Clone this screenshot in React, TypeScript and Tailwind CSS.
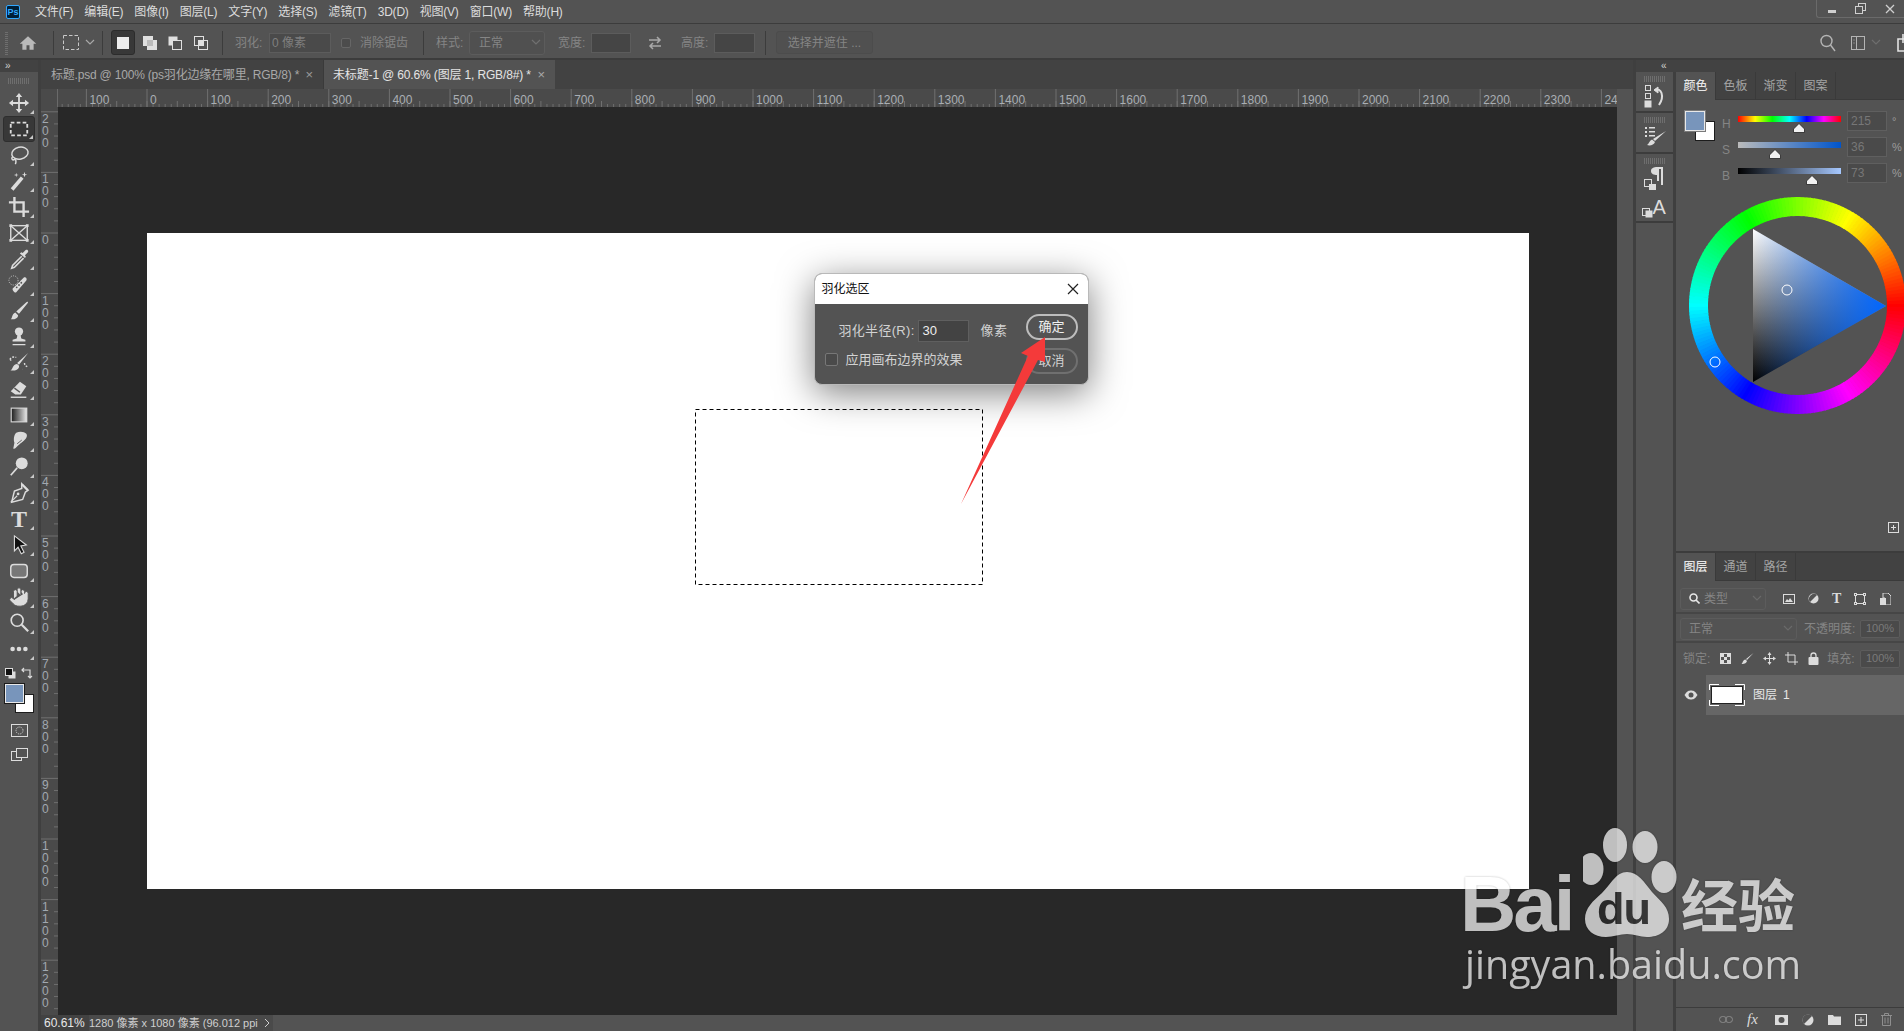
import React from 'react';
import { Hand } from 'lucide-react';

const menus = ['文件(F)', '编辑(E)', '图像(I)', '图层(L)', '文字(Y)', '选择(S)', '滤镜(T)', '3D(D)', '视图(V)', '窗口(W)', '帮助(H)'];

// 24-unit toolbar icon, stroke and fill come from each child
function Ic({ s = 22, children, className = '' }: { s?: number; children: React.ReactNode; className?: string }) {
  return (
    <svg width={s} height={s} viewBox="0 0 24 24" className={`shrink-0 ${className}`} fill="#dcdcdc" stroke="none">
      {children}
    </svg>
  );
}

const line = { fill: 'none', stroke: '#dcdcdc', strokeWidth: 2 };

const tools: { icon: React.ReactNode; active?: boolean }[] = [
  { icon: <Ic><path d="M12 5v14M5 12h14" {...line} /><path d="M12 1l3.5 4.5h-7zM12 23l-3.5-4.5h7zM1 12l4.5-3.5v7zM23 12l-4.5 3.5v-7z" /></Ic> },
  { icon: <Ic><rect x="3" y="5" width="18" height="14" {...line} strokeDasharray="4 2.5" /></Ic>, active: true },
  { icon: <Ic><ellipse cx="13" cy="10" rx="9" ry="6.5" transform="rotate(-12 13 10)" {...line} strokeWidth={1.6} /><path d="M5 14c-2 2 0 4 2 3s2 3 1 5" {...line} strokeWidth={1.6} /></Ic> },
  { icon: <Ic><path d="M3 21l11-13 3 2.5L6 23.5z" transform="translate(0 -1)" /><path d="M18 2l.8 2.5L21 5l-2.2.8L18 8l-.8-2.2L15 5l2.2-.5zM22 10v3M9 3l.5 2 2 .5-2 .5L9 8l-.5-2-2-.5 2-.5zM22 16h.1" /></Ic> },
  { icon: <Ic><path d="M7 1v16h16M1 7h16v16" {...line} strokeWidth={2.6} /></Ic> },
  { icon: <Ic><rect x="3" y="4" width="18" height="16" {...line} strokeWidth={1.5} /><path d="M3 4l18 16M21 4L3 20" {...line} strokeWidth={1.5} /><path d="M1.5 2.500h3v3h-3zM19.500 2.500h3v3h-3zM1.500 18.500h3v3h-3zM19.500 18.500h3v3h-3z" /></Ic> },
  { icon: <Ic><path d="M15 9L5 19l-1 3 3-1L17 11" {...line} strokeWidth={1.7} /><path d="M13 6l1.500-1.500 1.500 1 3-3c2-1.500 4 .5 2.500 2.500l-3 3 1 1.500L18.500 11z" /></Ic> },
  { icon: <Ic><path d="M6 15L17 4c1.500-1.500 4.500 1 3 3L9 20c-1.500 1.500-6-3.500-3-5z" /><circle cx="12" cy="12" r="1" fill="#555" /><circle cx="14.500" cy="9.500" r="1" fill="#555" /><circle cx="9.500" cy="14.500" r="1" fill="#555" /><circle cx="12" cy="8" r="1" fill="#555" /><circle cx="6" cy="7" r="5" {...line} strokeWidth={1} strokeDasharray="1 1.500" /></Ic> },
  { icon: <Ic><path d="M21 2c.8 0 1 .6.6 1.200L12 15l-3-2.500L20 2.500zM8 13.500l3 3c0 3-3.500 5-8 4.500 2-1.500 1-6 5-7.500z" /></Ic> },
  { icon: <Ic><circle cx="12" cy="6" r="4.500" /><path d="M10.500 9h3l1 4.500 4.500 1.500v2H5v-2l4.500-1.500zM5 19.500h14V21H5z" /></Ic> },
  { icon: <Ic><path d="M22 1L12 14l-2-2zM9.500 13c2 .5 3 2 2.500 3.500-1 3-5 4.500-9.500 3.500 3-1 2-6 7-7z" /><path d="M2 8c2-3 5-3 7-2M2 8l2.500 2M18 12c0 2 1 3 3 4M16 19h.1" {...line} strokeWidth={1.500} strokeDasharray="2 1.500" /></Ic> },
  { icon: <Ic><path d="M13 4l7 5-6 9H8l-5-3.500z" /><path d="M3 21h17" {...line} strokeWidth={1.500} /><path d="M7 11l6 4.500" stroke="#555" strokeWidth={1.500} /></Ic> },
  { icon: <Ic><defs><linearGradient id="grad"><stop offset="0" stopColor="#1a1a1a" /><stop offset="1" stopColor="#e8e8e8" /></linearGradient></defs><rect x="3.500" y="4.500" width="17" height="15" fill="url(#grad)" stroke="#dcdcdc" strokeWidth={1.200} /></Ic> },
  { icon: <Ic><path d="M9 3c4-2 9-1 11 1 2 3-1 6-3 8l-6 5-3 3c-1 1-3 .5-2-1l1-5c-1-3-1-8 2-11z" /><path d="M10 15l5-4M13 16l4-3" stroke="#555" strokeWidth={1} /></Ic> },
  { icon: <Ic><circle cx="15" cy="8" r="6.500" /><path d="M10 13L3 21" {...line} strokeWidth={1.800} /></Ic> },
  { icon: <Ic><path d="M15 2l7 7-3 2-3 8-12 3 3-12 8-3z" {...line} strokeWidth={1.600} /><path d="M3 22l7-7" {...line} strokeWidth={1.200} /><circle cx="11" cy="13" r="1.500" /><path d="M14 3l7 7 1-2-6-6z" /></Ic> },
  { icon: <span className="text-[24px] font-bold leading-none text-[#dcdcdc] [font-family:'Liberation_Serif',serif]">T</span> },
  { icon: <Ic><path d="M7 2l13 10-6 1 3.500 7-3 1.500-3.500-7-4 4z" fill="#111" stroke="#dcdcdc" strokeWidth={1.200} /></Ic> },
  { icon: <Ic><rect x="3" y="5" width="18" height="14" rx="3.500" fill="#777" stroke="#dcdcdc" strokeWidth={1.600} /></Ic> },
  { icon: <Hand size={22} className="fill-[#dcdcdc] text-[#535353]" strokeWidth={1} /> },
  { icon: <Ic><circle cx="10" cy="9" r="6.500" {...line} strokeWidth={1.800} /><path d="M15 14l7 7" {...line} strokeWidth={2.400} /></Ic> },
  { icon: <Ic><circle cx="5" cy="12" r="2.500" /><circle cx="12" cy="12" r="2.500" /><circle cx="19" cy="12" r="2.500" /></Ic> },
];

function Sep() {
  return <div className="h-[24px] w-px shrink-0 bg-[#3c3c3c]" />;
}

function Grip({ className = '' }: { className?: string }) {
  return <div className={`h-[6px] border-x-0 bg-[repeating-linear-gradient(90deg,#6e6e6e_0,#6e6e6e_1px,transparent_1px,transparent_2px)] ${className}`} />;
}

function Chev({ className = '' }: { className?: string }) {
  return (
    <svg width="10" height="7" viewBox="0 0 10 7" className={`shrink-0 ${className}`} fill="none" stroke="currentColor" strokeWidth="1.200">
      <path d="M1 1l4 4 4-4" />
    </svg>
  );
}

function OptionsBar() {
  const lbl = 'shrink-0 whitespace-nowrap text-[12px] text-[#858585]';
  const box = 'shrink-0 border border-[#5c5c5c] bg-[#4a4a4a]';
  return (
    <div className="flex h-[36px] shrink-0 items-center border-b-2 border-[#3c3c3c] pl-[5px] pt-[3px]">
      <div className="h-[24px] w-[3px] bg-[repeating-linear-gradient(0deg,#6e6e6e_0,#6e6e6e_1px,transparent_1px,transparent_2px)]" />
      <Ic s={18} className="ml-[11px]"><path d="M12 3L1 13h3.500v8H10v-6h4v6h5.500v-8H23z" fill="#b9b9b9" /></Ic>
      <div className="ml-[16px]"><Sep /></div>
      <svg width="16" height="15" viewBox="0 0 16 15" className="ml-[9px] shrink-0" fill="none" stroke="#c8c8c8"><rect x="0.500" y="0.500" width="15" height="14" strokeDasharray="3.500 2" /></svg>
      <Chev className="ml-[6px] text-[#a8a8a8]" />
      <div className="ml-[7px]"><Sep /></div>
      <div className="ml-[8px] flex h-[25px] w-[24px] shrink-0 items-center justify-center rounded-[3px] border border-[#2c2c2c] bg-[#383838]">
        <div className="h-[12px] w-[12px] bg-[#ececec]" />
      </div>
      <svg width="16" height="16" viewBox="0 0 16 16" className="ml-[7px] shrink-0" fill="#e0e0e0"><rect x="1" y="1" width="10" height="10" /><rect x="5" y="5" width="10" height="10" /><path d="M5 5h6v6H5z" fill="#bbb" /></svg>
      <svg width="16" height="16" viewBox="0 0 16 16" className="ml-[9px] shrink-0"><rect x="1.500" y="1.500" width="9" height="9" fill="#e0e0e0" /><rect x="5.500" y="5.500" width="9" height="9" fill="#535353" stroke="#e0e0e0" /></svg>
      <svg width="16" height="16" viewBox="0 0 16 16" className="ml-[10px] shrink-0" fill="none" stroke="#e0e0e0"><rect x="1.500" y="1.500" width="9" height="9" /><rect x="5.500" y="5.500" width="9" height="9" /><rect x="5.500" y="5.500" width="5" height="5" fill="#e0e0e0" /></svg>
      <div className="ml-[13px]"><Sep /></div>
      <span className={`${lbl} ml-[12px] w-[27px]`}>羽化:</span>
      <div className={`${box} ml-[7px] h-[20px] w-[62px] pl-[2px] text-[12px] leading-[18px] text-[#7f7f7f]`}>0 像素</div>
      <div className="ml-[10px] h-[10px] w-[10px] shrink-0 rounded-[2px] border border-[#666] bg-[#4c4c4c]" />
      <span className={`${lbl} ml-[9px] w-[48px]`}>消除锯齿</span>
      <div className="ml-[15px]"><Sep /></div>
      <span className={`${lbl} ml-[12px] w-[27px]`}>样式:</span>
      <div className={`${box} ml-[6px] flex h-[24px] w-[76px] items-center justify-between rounded-[3px] border-[#5a5a5a] bg-[#505050] pl-[9px] pr-[3px] text-[12px] text-[#858585]`}>
        正常<Chev className="text-[#707070]" />
      </div>
      <span className={`${lbl} ml-[13px] w-[27px]`}>宽度:</span>
      <div className={`${box} ml-[6px] h-[20px] w-[40px] border-[#5c5c5c] bg-[#454545]`} />
      <svg width="16" height="16" viewBox="0 0 16 16" className="ml-[16px] shrink-0" fill="none" stroke="#a8a8a8" strokeWidth="1.500"><path d="M2 5h11M10 2l3 3-3 3M14 11H3M6 8l-3 3 3 3" /></svg>
      <span className={`${lbl} ml-[18px] w-[27px]`}>高度:</span>
      <div className={`${box} ml-[6px] h-[20px] w-[41px] bg-[#454545]`} />
      <div className="ml-[10px]"><Sep /></div>
      <div className="ml-[10px] flex h-[23px] w-[97px] shrink-0 items-center justify-center rounded-[3px] border border-[#4c4c4c] bg-[#505050] text-[12px] text-[#858585]">选择并遮住 ...</div>
      <div className="-mr-[5px] ml-auto flex items-center">
        <svg width="16" height="18" viewBox="0 0 16 18" fill="none" stroke="#b4b4b4" strokeWidth="1.400"><circle cx="6.500" cy="7" r="5.500" /><path d="M10.500 11l4.500 6" /></svg>
        <svg width="16" height="16" viewBox="0 0 16 16" className="ml-[14px]" fill="none" stroke="#b4b4b4"><rect x="1.500" y="1.500" width="13" height="13" /><path d="M6.500 2v12" /><path d="M3.500 5h1M3.500 8h1" /></svg>
        <Chev className="ml-[5px] text-[#6e6e6e]" />
        <svg width="12" height="20" viewBox="0 0 12 20" className="ml-[16px]" fill="none" stroke="#e2e2e2" strokeWidth="1.600"><path d="M1 6h11v12H1zM6 10V1" /></svg>
      </div>
    </div>
  );
}

function ToolBar() {
  return (
    <div className="flex w-[41px] shrink-0 flex-col border-r-[3px] border-[#3f3f3f] bg-[#535353]">
      <div className="flex h-[12px] items-center bg-[#424242] pl-[5px] text-[10px] leading-none text-[#d0d0d0]">»</div>
      <Grip className="mx-[8px] mt-[6px] w-[22px]" />
      <div className="mt-[6px] flex flex-col items-center">
        {tools.map((t, i) => (
          <div key={i} className={`relative flex h-[26px] w-[32px] items-center justify-center rounded-[3px] ${t.active ? 'border border-[#2e2e2e] bg-[#383838]' : ''}`}>
            {t.icon}
            <div className="absolute bottom-[2px] right-[1px] h-0 w-0 border-b-[4px] border-l-[4px] border-b-[#c8c8c8] border-l-transparent" />
          </div>
        ))}
      </div>
      <div className="mt-[5px] flex items-center justify-between pl-[5px] pr-[5px]">
        <svg width="11" height="11" viewBox="0 0 11 11"><rect x="3.500" y="3.500" width="7" height="7" fill="#dcdcdc" /><rect x="0.500" y="0.500" width="7" height="7" fill="#111" stroke="#dcdcdc" /></svg>
        <svg width="12" height="12" viewBox="0 0 12 12" fill="none" stroke="#dcdcdc" strokeWidth="1.200"><path d="M1 3h8v8M3 1L1 3l2 2M7 9l2 2 2-2" /></svg>
      </div>
      <div className="relative mt-[5px] h-[30px]">
        <div className="absolute left-[15px] top-[10px] h-[19px] w-[19px] border border-[#1c1c1c] bg-white" />
        <div className="absolute left-[5px] top-0 h-[19px] w-[19px] border border-[#e8e8e8] bg-[#7895bb] outline outline-1 outline-[#1c1c1c]" />
      </div>
      <div className="mt-[10px] flex justify-center">
        <svg width="17" height="13" viewBox="0 0 17 13" fill="none" stroke="#dcdcdc"><rect x="0.500" y="0.500" width="16" height="12" /><circle cx="8.500" cy="6.500" r="3.500" strokeDasharray="1 1" /></svg>
      </div>
      <div className="mt-[11px] flex justify-center">
        <svg width="17" height="14" viewBox="0 0 17 14" fill="#535353" stroke="#dcdcdc"><rect x="0.500" y="3.500" width="10" height="9" /><rect x="5.500" y="0.500" width="11" height="9" /></svg>
      </div>
    </div>
  );
}

function TabBar() {
  return (
    <div className="flex h-[29px] shrink-0 bg-[#424242] text-[12px]">
      <div className="flex w-[283px] items-center border-r border-[#3a3a3a] pl-[10px] text-[#a8a8a8]">
        <span className="whitespace-nowrap tracking-[-0.2px]">标题.psd @ 100% (ps羽化边缘在哪里, RGB/8) *</span>
        <span className="ml-auto mr-[10px] text-[13px] text-[#9a9a9a]">×</span>
      </div>
      <div className="flex w-[231px] items-center bg-[#535353] pl-[9px] text-[#e4e4e4]">
        <span className="whitespace-nowrap tracking-[-0.15px]">未标题-1 @ 60.6% (图层 1, RGB/8#) *</span>
        <span className="ml-auto mr-[10px] text-[13px] text-[#a8a8a8]">×</span>
      </div>
    </div>
  );
}

function HRuler() {
  const ticks = Array.from({ length: 260 }, (_, i) => 89 - 60.6 * 2 + i * 6.06);
  const labels = Array.from({ length: 26 }, (_, i) => i - 1);
  return (
    <svg width="1559" height="18" className="block shrink-0">
      {ticks.map((x, i) => (
        <line key={i} x1={x} x2={x} y1={i % 5 === 0 ? 12 : 15} y2="18" stroke="#6f6f6f" />
      ))}
      {labels.map((k) => {
        const x = 89 + 60.6 * k;
        return (
          <g key={k}>
            <line x1={x} x2={x} y1="0" y2="18" stroke="#6f6f6f" />
            <text x={x + 3} y="15" fontSize="12" fill="#a9aeb3">{k === 24 ? '24' : Math.abs(k * 100)}</text>
          </g>
        );
      })}
    </svg>
  );
}

function VRuler() {
  const labels = Array.from({ length: 15 }, (_, i) => i - 2);
  const ticks = Array.from({ length: 76 }, (_, i) => 126 - 121.2 + i * 12.12);
  return (
    <svg width="17" height="908" className="block shrink-0">
      {ticks.map((y, i) => (
        <line key={i} y1={y} y2={y} x1={i % 5 === 0 ? 0 : 13} x2="17" stroke="#6f6f6f" />
      ))}
      {labels.map((k) => {
        const y = 126 + 60.6 * k;
        return String(Math.abs(k * 100)).split('').map((d, j) => (
          <text key={`${k}-${j}`} x="1" y={y + 11 + j * 12} fontSize="12" fill="#a1a8b0">{d}</text>
        ));
      })}
    </svg>
  );
}

function FeatherDialog() {
  return (
    <div className="absolute left-[667px] top-[40px] w-[275px] overflow-hidden rounded-[8px] border border-[#b9b9b9] bg-[#535353] shadow-[0_8px_36px_rgba(0,0,0,0.5)]">
      <div className="flex h-[30px] items-center justify-between bg-white pl-[7px] pr-[9px] text-[12px] text-[#111]">
        羽化选区
        <svg width="12" height="12" viewBox="0 0 12 12" stroke="#222" strokeWidth="1.200"><path d="M1 1l10 10M11 1L1 11" /></svg>
      </div>
      <div className="flex h-[80px] justify-between pr-[10px] pt-[10px] text-[13px] text-[#d2d2d2]">
        <div>
          <div className="mt-[6px] flex h-[22px] items-center pl-[24px]">
            <span className="w-[79px] whitespace-nowrap tracking-[0.3px]">羽化半径(R):</span>
            <div className="h-[22px] w-[51px] border border-[#5f5f5f] bg-[#434343] pl-[4px] leading-[20px] text-[#eee]">30</div>
            <span className="ml-[12px] tracking-[0.5px]">像素</span>
          </div>
          <div className="mt-[8px] flex items-center pl-[10px]">
            <div className="h-[13px] w-[13px] rounded-[2px] border border-[#777] bg-[#4a4a4a]" />
            <span className="ml-[8px]">应用画布边界的效果</span>
          </div>
        </div>
        <div className="flex flex-col gap-[8px]">
          <div className="flex h-[26px] w-[52px] items-center justify-center rounded-full border-2 border-[#bdbdbd] text-[#f0f0f0]">确定</div>
          <div className="flex h-[26px] w-[52px] items-center justify-center rounded-full border-2 border-[#707070]">取消</div>
        </div>
      </div>
    </div>
  );
}

function CanvasArea() {
  return (
    <div className="flex flex-1 items-center justify-center bg-[#282828]">
      <div className="relative h-[656px] w-[1382px] bg-white">
        <svg width="290" height="178" className="absolute left-[547px] top-[175px]" fill="none">
          <rect x="1.500" y="1.500" width="287" height="175" stroke="#000" strokeDasharray="4 3" />
        </svg>
        <FeatherDialog />
        {/* red annotation arrow */}
        <svg width="100" height="180" viewBox="0 0 100 180" className="absolute left-[810px] top-[100px]">
          <path d="M4 171L71 23 64 20 88 4 88 29 81 27Z" fill="#f43a3a" />
        </svg>
      </div>
    </div>
  );
}

function StatusBar() {
  return (
    <div className="flex h-[16px] shrink-0 items-center text-[12px] text-[#cfcfcf]">
      <div className="w-[48px] bg-[#424242] pl-[3px] leading-[16px] text-[#e8e8e8]">60.61%</div>
      <div className="flex w-[184px] items-center bg-[#4a4a4a] text-[11px] leading-[16px]">
        <span className="w-[172px] overflow-hidden whitespace-nowrap">1280 像素 x 1080 像素 (96.012 ppi</span>
        <svg width="6" height="10" viewBox="0 0 6 10" fill="none" stroke="#cfcfcf" className="ml-[3px]"><path d="M1 1l4 4-4 4" /></svg>
      </div>
    </div>
  );
}

function SideDock() {
  return (
    <div className="box-content flex w-[37px] shrink-0 flex-col border-r-[3px] border-[#3f3f3f]">
      <div className="flex h-[41px] flex-col items-center border-b-2 border-[#3c3c3c] pt-[4px]">
        <Grip className="w-[22px]" />
        <svg width="24" height="24" viewBox="0 0 24 24" className="mt-[2px]" fill="none" stroke="#dcdcdc"><rect x="2.500" y="1.500" width="5" height="5" /><rect x="2.500" y="9.500" width="5" height="5" /><rect x="2" y="17" width="6" height="6" fill="#dcdcdc" /><path d="M12 6c6-3 10 6 4 15" strokeWidth="2" /><path d="M11 6l4-3v6z" fill="#dcdcdc" /></svg>
      </div>
      <div className="flex h-[41px] flex-col items-center border-b-2 border-[#3c3c3c] pt-[4px]">
        <Grip className="w-[22px]" />
        <svg width="24" height="24" viewBox="0 0 24 24" className="mt-[1px]" fill="#dcdcdc"><path d="M2 3h2v2H2zM6 3h6v1.500H6zM2 7h2v2H2zM6 7h6v1.500H6zM2 11h2v2H2zM6 11h6v1.500H6z" /><path d="M23 7L12 17l-2-2zM9 15.500l3 2.500c-1 3-5 4-8 3 2-1 2-4 5-5.500z" /></svg>
      </div>
      <div className="flex h-[69px] flex-col items-center border-b-2 border-[#3c3c3c] pt-[4px]">
        <Grip className="w-[22px]" />
        <svg width="24" height="24" viewBox="0 0 24 24" className="mt-[2px]" fill="#dcdcdc"><path d="M8 5c0-3 3-4 6-4h6v18h-2V3h-2v12h-2V9c-3 0-6-1-6-4z" /><rect x="1.500" y="13.500" width="7" height="7" stroke="#dcdcdc" fill="#535353" /><rect x="6" y="18" width="7" height="7" /></svg>
        <div className="mt-[1px] flex h-[28px] w-[26px] items-end">
          <svg width="11" height="14" viewBox="0 0 11 14" fill="#535353" stroke="#dcdcdc"><rect x="0.500" y="3.500" width="7" height="7" /><rect x="4" y="6" width="6" height="6" fill="#dcdcdc" /></svg>
          <span className="mb-[1px] text-[20px] leading-[22px] text-[#dcdcdc] [font-family:'Liberation_Sans',sans-serif]">A</span>
        </div>
      </div>
    </div>
  );
}

function PanelTabs({ items }: { items: string[] }) {
  return (
    <div className="flex h-[28px] shrink-0 border-b border-[#3a3a3a] bg-[#424242] text-[12px]">
      {items.map((t, i) => (
        <div key={t} className={`flex h-[28px] w-[40px] items-center justify-center border-r border-[#3a3a3a] ${i === 0 ? 'bg-[#535353] font-medium text-[#e6e6e6]' : 'text-[#a4a4a4]'}`}>
          {t}
        </div>
      ))}
    </div>
  );
}

function Slider({ label, unit, value, thumb, bar }: { label: string; unit: string; value: string; thumb: number; bar: string }) {
  return (
    <div className="flex h-[26px] items-start">
      <span className="mt-[3px] w-[16px] text-[12px] text-[#858585]">{label}</span>
      <div className="relative mt-[4px] h-[6px] w-[103px]">
        <div className={`h-full w-full ${bar}`} />
        <svg width="12" height="10" viewBox="0 0 12 10" className="absolute top-[7px]" style={{ left: thumb - 6 }} fill="#f2f2f2" stroke="#222" strokeWidth="0.800"><path d="M6 .5l5.500 5.500v3.500H.5V6z" /></svg>
      </div>
      <div className="-mt-[1px] ml-[6px] h-[20px] w-[40px] border border-[#5f5f5f] bg-[#4a4a4a] pl-[3px] text-[12px] leading-[18px] text-[#777]">{value}</div>
      <span className="ml-[5px] mt-[1px] text-[11px] text-[#9c9c9c]">{unit}</span>
    </div>
  );
}

function ColorWheel() {
  const cx = 121.5, cy = 115.5, r0 = 89.5, r1 = 108.5;
  const seg = Array.from({ length: 180 }, (_, i) => i * 2);
  const pt = (r: number, deg: number) => {
    const a = (deg * Math.PI) / 180;
    return `${cx + r * Math.cos(a)} ${cy - r * Math.sin(a)}`;
  };
  return (
    <svg width="228" height="230" className="block">
      <defs>
        <linearGradient id="triBw" x1="0" y1="0" x2="0" y2="1"><stop offset="0" stopColor="#fff" /><stop offset="1" stopColor="#000" /></linearGradient>
        <linearGradient id="triHue" x1="0" y1="0" x2="1" y2="0"><stop offset="0" stopColor="#0066ff" stopOpacity="0" /><stop offset="1" stopColor="#0066ff" /></linearGradient>
      </defs>
      {seg.map((d) => (
        <path key={d} d={`M${pt(r0, d - 1.2)}L${pt(r1, d - 1.2)}L${pt(r1, d + 1.2)}L${pt(r0, d + 1.2)}Z`} fill={`hsl(${d},100%,50%)`} />
      ))}
      <polygon points="77,39 210,116 77,192" fill="url(#triBw)" />
      <polygon points="77,39 210,116 77,192" fill="url(#triHue)" />
      <circle cx="111" cy="100" r="5" fill="none" stroke="#fff" />
      <circle cx="39" cy="172" r="5" fill="none" stroke="#fff" />
    </svg>
  );
}

function ColorPanel() {
  return (
    <div className="flex h-[481px] shrink-0 flex-col border-b-2 border-[#3c3c3c]">
      <PanelTabs items={['颜色', '色板', '渐变', '图案']} />
      <div className="mt-[11px] flex pl-[9px]">
        <div className="relative h-[32px] w-[32px] shrink-0">
          <div className="absolute left-[10px] top-[10px] h-[20px] w-[20px] border border-[#1c1c1c] bg-white" />
          <div className="absolute left-0 top-0 h-[20px] w-[20px] border border-[#e8e8e8] bg-[#7895bb] outline outline-1 outline-[#7a7a7a]" />
        </div>
        <div className="flex flex-col pl-[5px] pt-[1px]">
          <Slider label="H" unit="°" value="215" thumb={61} bar="bg-[linear-gradient(90deg,#f00,#ff0,#0f0,#0ff,#00f,#f0f,#f00)]" />
          <Slider label="S" unit="%" value="36" thumb={37} bar="bg-[linear-gradient(90deg,#bbb,#0055cc)]" />
          <Slider label="B" unit="%" value="73" thumb={74} bar="bg-[linear-gradient(90deg,#000,#a6c8ff)]" />
        </div>
      </div>
      <ColorWheel />
      <div className="mb-[18px] mr-[5px] mt-auto flex justify-end">
        <svg width="11" height="11" viewBox="0 0 11 11" fill="none" stroke="#dcdcdc"><rect x="0.500" y="0.500" width="10" height="10" /><path d="M5.500 3v5M3 5.500h5" /></svg>
      </div>
    </div>
  );
}

function LayersPanel() {
  const dim = 'shrink-0 whitespace-nowrap text-[12px] text-[#858585]';
  const pct = 'ml-auto flex h-[18px] w-[40px] items-center justify-center rounded-[2px] border border-[#5c5c5c] bg-[#4a4a4a] text-[11px] text-[#7a7a7a]';
  return (
    <div className="flex flex-1 flex-col">
      <PanelTabs items={['图层', '通道', '路径']} />
      <div className="flex h-[33px] items-center border-b-2 border-[#464646] pl-[4px] pt-[4px]">
        <div className="flex h-[22px] w-[86px] items-center rounded-[3px] border border-[#5c5c5c] pl-[8px] pr-[3px] text-[12px] text-[#858585]">
          <svg width="11" height="11" viewBox="0 0 11 11" fill="none" stroke="#e8e8e8" strokeWidth="1.600"><circle cx="4.500" cy="4.500" r="3.500" /><path d="M7 7l3.500 3.500" /></svg>
          <span className="ml-[4px]">类型</span>
          <Chev className="ml-auto text-[#6a6a6a]" />
        </div>
        <svg width="12" height="10" viewBox="0 0 12 10" className="ml-[17px]" fill="none" stroke="#dcdcdc"><rect x="0.500" y="0.500" width="11" height="9" /><path d="M2 8l2-3 1.500 1.500L7 4l3 4z" fill="#dcdcdc" stroke="none" /></svg>
        <svg width="11" height="11" viewBox="0 0 11 11" className="ml-[13px]"><circle cx="5.500" cy="5.500" r="5" fill="#dcdcdc" /><path d="M9 2L2 9A5 5 0 0 1 9 2z" fill="#535353" /></svg>
        <span className="ml-[13px] text-[14px] font-bold leading-none text-[#dcdcdc] [font-family:'Liberation_Serif',serif]">T</span>
        <svg width="12" height="12" viewBox="0 0 12 12" className="ml-[13px]" fill="#535353" stroke="#dcdcdc"><rect x="1.500" y="1.500" width="9" height="9" /><rect x="0.500" y="0.500" width="2" height="2" /><rect x="9.500" y="0.500" width="2" height="2" /><rect x="0.500" y="9.500" width="2" height="2" /><rect x="9.500" y="9.500" width="2" height="2" /></svg>
        <svg width="11" height="12" viewBox="0 0 11 12" className="ml-[14px]" fill="#dcdcdc"><path d="M3 0h5l3 3v9H5V5H3z" fill="none" stroke="#dcdcdc" /><rect x="0" y="5" width="6" height="7" /></svg>
      </div>
      <div className="flex h-[29px] items-center border-b-2 border-[#464646] pl-[4px] pr-[4px] pt-[2px]">
        <div className="flex h-[22px] w-[117px] items-center justify-between rounded-[3px] border border-[#5c5c5c] pl-[8px] pr-[3px] text-[12px] text-[#858585]">
          正常<Chev className="text-[#6a6a6a]" />
        </div>
        <span className={`${dim} ml-[7px]`}>不透明度:</span>
        <div className={pct}>100%</div>
      </div>
      <div className="flex h-[31px] items-center pl-[7px] pr-[4px]">
        <span className={dim}>锁定:</span>
        <svg width="11" height="11" viewBox="0 0 11 11" className="ml-[10px]" fill="#dcdcdc"><rect x="0.500" y="0.500" width="10" height="10" fill="#535353" stroke="#dcdcdc" /><path d="M1 1h3v3H1zM7 1h3v3H7zM4 4h3v3H4zM1 7h3v3H1zM7 7h3v3H7z" /></svg>
        <svg width="13" height="13" viewBox="0 0 13 13" className="ml-[10px]" fill="#dcdcdc"><path d="M12.500 1L6 8 5 7zM4.500 7.500L6 9c-.5 2-3 3.500-5.500 3 1.500-1 1-4 4-4.500z" /></svg>
        <svg width="13" height="13" viewBox="0 0 13 13" className="ml-[9px]" fill="#dcdcdc"><path d="M6 3h1v7H6zM3 6h7v1H3z" /><path d="M6.500 0l2 3h-4zM6.500 13l-2-3h4zM0 6.500l3-2v4zM13 6.500l-3 2v-4z" /></svg>
        <svg width="13" height="13" viewBox="0 0 13 13" className="ml-[9px]" fill="none" stroke="#dcdcdc"><path d="M3 0v10h10M0 3h10v10" /></svg>
        <svg width="11" height="13" viewBox="0 0 11 13" className="ml-[10px]" fill="#dcdcdc"><rect x="0.500" y="5" width="10" height="8" rx="1" /><path d="M3 5V3.500a2.500 2.500 0 0 1 5 0V5" fill="none" stroke="#dcdcdc" strokeWidth="1.300" /></svg>
        <span className={`${dim} ml-[8px]`}>填充:</span>
        <div className={pct}>100%</div>
      </div>
      <div className="mt-[1px] flex h-[40px]">
        <div className="flex w-[30px] items-center justify-center">
          <svg width="14" height="10" viewBox="0 0 14 10"><path d="M0.500 5C3 1 5 0.500 7 0.500S11 1 13.500 5C11 9 9 9.500 7 9.500S3 9 0.500 5z" fill="#dcdcdc" /><circle cx="7" cy="5" r="2.500" fill="#535353" /></svg>
        </div>
        <div className="flex flex-1 items-center bg-[#666666] pl-[3px] text-[12px] text-[#e8e8e8]">
          <svg width="36" height="22" viewBox="0 0 36 22" fill="none" className="shrink-0">
            <rect x="2.500" y="2.500" width="31" height="17" fill="#fff" stroke="#222" />
            <path d="M.5 6V.5H10M26 .5h9.500V6M.5 16v5.500H10M26 21.500h9.500V16" stroke="#fff" />
          </svg>
          <span className="ml-[8px]">图层</span>
          <span className="ml-[6px]">1</span>
        </div>
      </div>
      <div className="mt-auto flex h-[24px] items-center justify-end gap-[14px] border-t border-[#3c3c3c] pr-[12px]">
        <svg width="14" height="7" viewBox="0 0 14 7" fill="none" stroke="#8a8a8a"><rect x="0.500" y="0.500" width="7" height="6" rx="3" /><rect x="6.500" y="0.500" width="7" height="6" rx="3" /></svg>
        <span className="w-[14px] text-[15px] italic leading-none text-[#dcdcdc] [font-family:'Liberation_Serif',serif]">fx</span>
        <svg width="13" height="10" viewBox="0 0 13 10"><rect width="13" height="10" fill="#dcdcdc" /><circle cx="6.500" cy="5" r="3" fill="#535353" /></svg>
        <svg width="12" height="12" viewBox="0 0 12 12"><circle cx="6" cy="6" r="5.500" fill="#dcdcdc" /><path d="M10 2L2 10A5.500 5.500 0 0 1 10 2z" fill="#535353" /></svg>
        <svg width="13" height="10" viewBox="0 0 13 10" fill="#dcdcdc"><path d="M0 0h5l1 1.500h7V10H0z" /></svg>
        <svg width="12" height="12" viewBox="0 0 12 12" fill="none" stroke="#dcdcdc"><rect x="0.500" y="0.500" width="11" height="11" /><path d="M6 3v6M3 6h6" /></svg>
        <svg width="11" height="13" viewBox="0 0 11 13" fill="none" stroke="#8f8f8f"><path d="M0 2.500h11M3.500 2.500V.5h4v2M1.500 2.500v10h8v-10M4 4.500v6M7 4.500v6" /></svg>
      </div>
    </div>
  );
}

function Watermark() {
  return (
    <div className="pointer-events-none absolute left-[1455px] top-[825px] h-[170px] w-[350px] text-white opacity-70 [filter:drop-shadow(0_0_1px_rgba(0,0,0,0.35))]">
      <span className="absolute left-[5px] top-[40px] text-[78px] font-bold leading-[78px] tracking-[-3px] [font-family:'Liberation_Sans',sans-serif]">Bai</span>
      <svg width="100" height="115" viewBox="0 0 100 115" className="absolute left-[128px] top-0" fill="#fff">
        <ellipse cx="32" cy="20" rx="12" ry="17" />
        <ellipse cx="62" cy="22" rx="12.500" ry="16" />
        <ellipse cx="8" cy="44" rx="12.500" ry="16" />
        <ellipse cx="81" cy="52" rx="12.500" ry="16" />
        <path transform="translate(0 17)" d="M44 30c11 0 17 10 25 20 9 10 17 15 17 27 0 12-10 18-22 18-7 0-13-3-20-3s-14 3-21 3C11 95 2 88 2 77c0-11 8-18 17-26 9-9 14-21 25-21z" />
      </svg>
      <span className="absolute left-[142px] top-[59px] text-[45px] font-bold leading-[50px] tracking-[-1px] text-[#2a2a2a] [font-family:'Liberation_Sans',sans-serif]">du</span>
      <span className="absolute left-[226px] top-[42px] whitespace-nowrap text-[57px] font-bold leading-[70px] [font-family:'Noto_Sans_CJK_SC',sans-serif]">经验</span>
      <span className="absolute left-[10px] top-[119px] whitespace-nowrap text-[39.5px] leading-[40px] [font-family:'Open_Sans',sans-serif]">jingyan.baidu.com</span>
    </div>
  );
}

export default function App() {
  return (
    <div className="relative flex h-[1031px] w-[1904px] flex-col overflow-hidden bg-[#535353] [font-family:'Liberation_Sans','Noto_Sans_CJK_SC',sans-serif]">
      <div className="flex h-[24px] shrink-0 border-b border-[#3c3c3c]">
        <div className="ml-[6px] mt-[5px] flex h-[14px] w-[14px] items-center justify-center rounded-[2px] border border-[#31a8ff] bg-[#001e36] text-[9px] font-bold leading-none text-[#31a8ff]">Ps</div>
        <div className="ml-[15px] flex h-[23px] items-center gap-[11px] text-[12px] tracking-[-0.2px] text-[#dcdcdc]">
          {menus.map((m) => <span key={m} className="whitespace-nowrap">{m}</span>)}
        </div>
        <div className="ml-auto flex h-[18px] w-[88px] items-center justify-around rounded-bl-[3px] border-b border-l border-[#6a6a6a] pl-[2px]">
          <div className="mt-[6px] h-[3px] w-[8px] bg-[#cfcfcf]" />
          <svg width="11" height="11" viewBox="0 0 11 11" fill="#535353" stroke="#cfcfcf"><rect x="3.500" y="0.500" width="7" height="7" /><rect x="0.500" y="3.500" width="7" height="7" /></svg>
          <svg width="10" height="10" viewBox="0 0 10 10" stroke="#cfcfcf" strokeWidth="1.300"><path d="M1 1l8 8M9 1L1 9" /></svg>
        </div>
      </div>
      <OptionsBar />
      <div className="flex min-h-0 flex-1">
        <ToolBar />
        <div className="flex w-[1592px] shrink-0 flex-col">
          <TabBar />
          <div className="flex min-h-0 flex-1">
            <div className="flex w-[1576px] shrink-0 flex-col">
              <div className="flex h-[18px] shrink-0 bg-[#4a4a4a]">
                <div className="h-[18px] w-[17px] border-r border-[#6a6a6a] bg-[#4a4a4a]" />
                <HRuler />
              </div>
              <div className="flex min-h-0 flex-1">
                <div className="bg-[#4a4a4a]"><VRuler /></div>
                <CanvasArea />
              </div>
              <StatusBar />
            </div>
          </div>
        </div>
        <div className="flex w-[271px] shrink-0 flex-col border-l-[3px] border-[#3f3f3f]">
          <div className="flex h-[12px] shrink-0 items-center bg-[#424242] pl-[25px] text-[10px] leading-none text-[#d0d0d0]">«</div>
          <div className="flex min-h-0 flex-1">
            <SideDock />
            <div className="flex min-w-0 flex-1 flex-col">
              <ColorPanel />
              <LayersPanel />
            </div>
          </div>
        </div>
      </div>
      <Watermark />
    </div>
  );
}
